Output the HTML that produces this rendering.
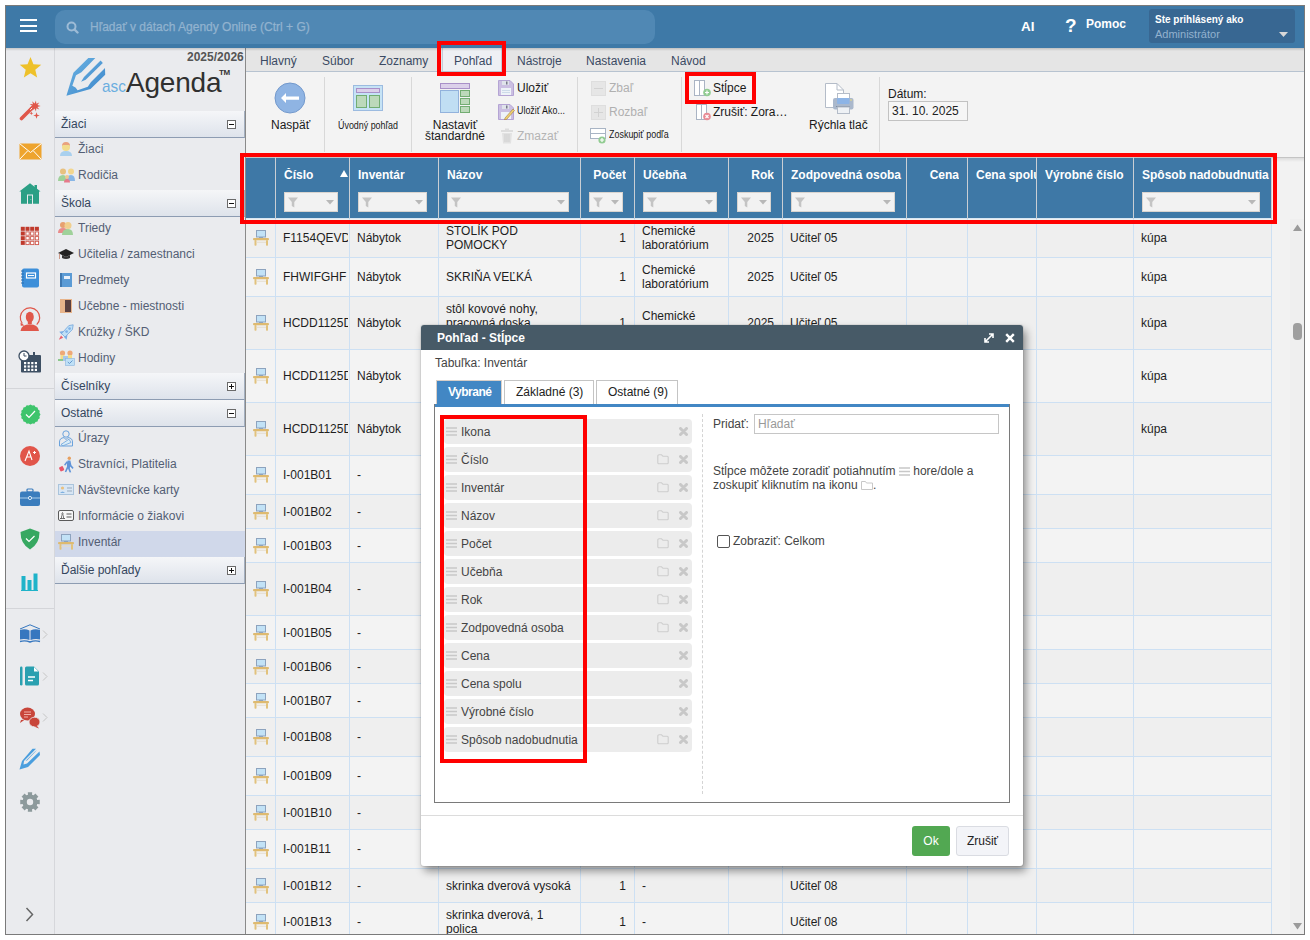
<!DOCTYPE html>
<html><head><meta charset="utf-8">
<style>
*{box-sizing:border-box;margin:0;padding:0}
html,body{width:1310px;height:940px;overflow:hidden;background:#fff;font-family:"Liberation Sans",sans-serif;font-size:12px;color:#222}
.a{position:absolute}
#frame{left:5px;top:5px;width:1300px;height:930px;border:1px solid #7a7a7a;z-index:100;pointer-events:none}
#clip{left:0;top:0;width:1310px;height:940px;clip-path:inset(6px 6px 6px 6px);overflow:hidden}
/* top bar */
#top{left:0;top:0;width:1310px;height:48px;background:#3e79a7}
#search{left:55px;top:10px;width:600px;height:34px;border-radius:10px;background:#5088b4}
/* icon column */
#icol{left:0;top:48px;width:55px;height:892px;background:#eaebee;border-right:1px solid #d6d7db}
#side{left:55px;top:48px;width:191px;height:892px;background:#eaebee;border-right:1px solid #8a8a8a}
.sh{position:absolute;left:55px;width:190px;height:27px;background:linear-gradient(#f5f6f8,#dee3eb);border-bottom:1px solid #8d9cb2;border-right:1px solid #a4b0c0;color:#34465e;font-size:12px;padding-left:6px;line-height:27px;z-index:2}
.sh .bx{position:absolute;left:172px;top:9px;width:9px;height:9px;border:1px solid #6a6a6a;background:#fff}
.sh .bx:before{content:"";position:absolute;left:1px;top:2.8px;width:5px;height:1.6px;background:#111}
.sh .bx.p:after{content:"";position:absolute;left:2.7px;top:1px;width:1.6px;height:5px;background:#111}
.si{position:absolute;left:55px;width:190px;height:26px;color:#535e74;font-size:12px;line-height:22px;padding-left:23px}
.si svg{position:absolute;left:3px;top:3px}
/* ribbon */
#tabs{left:246px;top:48px;width:1064px;height:24px;background:#e5e5e5;border-bottom:1px solid #b7c3d0}
#rib{left:246px;top:72px;width:1064px;height:86px;background:#f3f3f3;border-bottom:1px solid #c4c4c4}
.tb{position:absolute;top:54px;color:#3b4a63;font-size:12px;line-height:14px}
.rl{position:absolute;font-size:12px;color:#1a1a1a;line-height:14px;white-space:nowrap}
.rs{position:absolute;top:77px;width:1px;height:75px;background:#d8d8d8}
.hd{position:absolute;top:168px;color:#fff;font-weight:bold;font-size:12px;line-height:14px;white-space:nowrap;overflow:hidden}
.fb{position:absolute;top:192px;height:20px;background:#f2f2f2;border:1px solid #d9d4cf}
.fb .fn{position:absolute;left:3px;top:4px}
.fb .dd{position:absolute;right:3px;top:7px}
.cl{position:absolute;display:flex;align-items:center;font-size:12px;line-height:14px;color:#1e1e1e;overflow:hidden}
.nw{white-space:nowrap}
.rb{border:4px solid #f00;z-index:50}
.it{position:absolute;z-index:61;left:444px;width:248px;height:25px;background:#ececec;border-radius:4px;color:#444;font-size:12px;line-height:26px;padding-left:17px}
.it .hn{position:absolute;left:2px;top:8px}
.it .fo{position:absolute;left:213px;top:7px}
.it .xx{position:absolute;left:235px;top:8px}
</style></head><body>
<div id="clip" class="a">

  <div id="top" class="a"></div>
  <div class="a" style="left:20px;top:19px;width:17px;height:2.4px;background:#fff"></div>
  <div class="a" style="left:20px;top:24.5px;width:17px;height:2.2px;background:#fff"></div>
  <div class="a" style="left:20px;top:29.8px;width:17px;height:2.2px;background:#fff"></div>
  <div id="search" class="a"></div>
  <svg class="a" style="left:66px;top:21px" width="13" height="13" viewBox="0 0 13 13"><circle cx="5.5" cy="5.5" r="4" fill="none" stroke="#9dbbd6" stroke-width="2"/><path d="M8.5 8.5 L11.5 11.5" stroke="#9dbbd6" stroke-width="2.4" stroke-linecap="round"/></svg>
  <div class="a" style="left:90px;top:20px;color:#92b3cf;font-size:12px;-webkit-text-stroke:0.25px #92b3cf">Hľadať v dátach Agendy Online (Ctrl + G)</div>
  <div class="a" style="left:1021px;top:19px;color:#fff;font-size:13.5px;font-weight:bold;line-height:16px">AI</div>
  <div class="a" style="left:1065px;top:15px;color:#fff;font-size:19px;font-weight:bold;line-height:22px">?</div>
  <div class="a" style="left:1086px;top:16px;color:#fff;font-size:12px;font-weight:bold;line-height:16px">Pomoc</div>
  <div class="a" style="left:1149px;top:9px;width:146px;height:34px;border-radius:3px;background:#386792"></div>
  <div class="a" style="left:1155px;top:14px;color:#fff;font-size:10px;font-weight:bold;line-height:12px">Ste prihlásený ako</div>
  <div class="a" style="left:1155px;top:28px;color:#93b2cf;font-size:11px;line-height:13px">Administrátor</div>
  <svg class="a" style="left:1279px;top:32px" width="9" height="5" viewBox="0 0 9 5"><path d="M0 0H9L4.5 5Z" fill="#d8d8d8"/></svg>
  <div id="icol" class="a"></div>
  <svg class="a" style="left:18.5px;top:56px" width="23" height="23" viewBox="0 0 23 23"><polygon points="11.50,1.00 14.44,8.25 22.25,8.81 16.26,13.85 18.14,21.44 11.50,17.30 4.86,21.44 6.74,13.85 0.75,8.81 8.56,8.25" fill="#eec12a"/></svg>
  <svg class="a" style="left:19px;top:99px" width="23" height="23" viewBox="0 0 23 23"><path d="M2.5 19.5 L13.5 8.5" stroke="#e0574a" stroke-width="3.6" stroke-linecap="round"/><path d="M11.2 10.8 L13.6 8.4" stroke="#fff" stroke-width="0.9"/><polygon points="21.60,7.00 18.44,7.89 20.29,10.60 17.30,9.25 16.97,12.51 15.55,9.56 13.20,11.85 14.01,8.67 10.74,8.92 13.40,7.00 10.74,5.08 14.01,5.33 13.20,2.15 15.55,4.44 16.97,1.49 17.30,4.75 20.29,3.40 18.44,6.11" fill="#e0574a"/><polygon points="17.50,13.20 18.32,15.68 20.80,16.50 18.32,17.32 17.50,19.80 16.68,17.32 14.20,16.50 16.68,15.68" fill="#e0574a"/><polygon points="12.30,12.20 12.79,13.71 14.30,14.20 12.79,14.69 12.30,16.20 11.81,14.69 10.30,14.20 11.81,13.71" fill="#e0574a"/></svg>
  <svg class="a" style="left:19px;top:143px" width="23" height="17" viewBox="0 0 23 17"><rect x="0.5" y="0.5" width="22" height="16" fill="#eea42e"/><path d="M0.5 0.5 L11.5 9.5 L22.5 0.5 M0.5 16.5 L8.5 8 M22.5 16.5 L14.5 8" stroke="#fff" stroke-width="1" fill="none"/></svg>
  <svg class="a" style="left:19px;top:182px" width="23" height="23" viewBox="0 0 23 23"><path d="M11 1.2 L21.6 9.5 L20 9.5 L20 21.8 L14 21.8 L14 12.5 L8 12.5 L8 21.8 L2 21.8 L2 9.5 L0.3 9.5Z" fill="#2b9f85"/><rect x="15.5" y="3" width="2.5" height="4" fill="#2b9f85"/><rect x="9" y="13.5" width="4" height="8.3" fill="#2b9f85"/><circle cx="11.9" cy="17.5" r="0.4" fill="#cfe"/></svg>
  <svg class="a" style="left:20px;top:226px" width="20" height="20" viewBox="0 0 20 20"><rect x="0.8" y="0.8" width="4" height="4" fill="#c0392b"/><rect x="5.5" y="0.8" width="4" height="4" fill="#c0392b"/><rect x="10.2" y="0.8" width="4" height="4" fill="#c0392b"/><rect x="14.9" y="0.8" width="4" height="4" fill="#c0392b"/><rect x="0.8" y="5.5" width="4" height="4" fill="#c0392b"/><rect x="5.9" y="5.9" width="3.3" height="3.3" fill="#fff" stroke="#d0584c" stroke-width="0.9"/><rect x="10.6" y="5.9" width="3.3" height="3.3" fill="#fff" stroke="#d0584c" stroke-width="0.9"/><rect x="15.3" y="5.9" width="3.3" height="3.3" fill="#fff" stroke="#d0584c" stroke-width="0.9"/><rect x="0.8" y="10.2" width="4" height="4" fill="#c0392b"/><rect x="5.9" y="10.6" width="3.3" height="3.3" fill="#fff" stroke="#d0584c" stroke-width="0.9"/><rect x="10.6" y="10.6" width="3.3" height="3.3" fill="#fff" stroke="#d0584c" stroke-width="0.9"/><rect x="15.3" y="10.6" width="3.3" height="3.3" fill="#fff" stroke="#d0584c" stroke-width="0.9"/><rect x="0.8" y="14.9" width="4" height="4" fill="#c0392b"/><rect x="5.9" y="15.3" width="3.3" height="3.3" fill="#fff" stroke="#d0584c" stroke-width="0.9"/><rect x="10.6" y="15.3" width="3.3" height="3.3" fill="#fff" stroke="#d0584c" stroke-width="0.9"/><rect x="15.3" y="15.3" width="3.3" height="3.3" fill="#fff" stroke="#d0584c" stroke-width="0.9"/></svg>
  <svg class="a" style="left:20px;top:268px" width="20" height="20" viewBox="0 0 20 20"><rect x="2" y="0.5" width="17" height="19" rx="2" fill="#3d8fd9"/><path d="M1 3H4M1 6H4M1 9H4M1 12H4M1 15H4" stroke="#2a6fb0" stroke-width="1"/><rect x="6.5" y="5" width="9" height="5" fill="none" stroke="#fff" stroke-width="1.2"/><path d="M8 7.5H14" stroke="#fff" stroke-width="1"/></svg>
  <svg class="a" style="left:19px;top:307px" width="22" height="25" viewBox="0 0 22 25"><path d="M17.7 17.6 A9.7 9.7 0 1 0 3.3 16.5" stroke="#e0574a" stroke-width="1.2" fill="none"/><path d="M1.5 15.5 L5.5 18.5 L1.8 18.8Z" fill="#e0574a"/><ellipse cx="10.8" cy="10" rx="4" ry="5.2" fill="#e0574a"/><rect x="8.8" y="13" width="4" height="4" fill="#e0574a"/><path d="M1.5 24 Q2.5 17.3 10.8 17.3 Q19 17.3 20 24Z" fill="#e0574a"/></svg>
  <svg class="a" style="left:18px;top:350px" width="24" height="23" viewBox="0 0 24 23"><rect x="3" y="5" width="20" height="17.5" rx="1" fill="#3d4f63"/><rect x="15" y="2" width="2" height="5" fill="#3d4f63"/><rect x="6.0" y="12.0" width="2.2" height="2.2" fill="#fff"/><rect x="9.6" y="12.0" width="2.2" height="2.2" fill="#fff"/><rect x="13.2" y="12.0" width="2.2" height="2.2" fill="#fff"/><rect x="16.8" y="12.0" width="2.2" height="2.2" fill="#fff"/><rect x="6.0" y="15.4" width="2.2" height="2.2" fill="#fff"/><rect x="9.6" y="15.4" width="2.2" height="2.2" fill="#fff"/><rect x="13.2" y="15.4" width="2.2" height="2.2" fill="#fff"/><rect x="16.8" y="15.4" width="2.2" height="2.2" fill="#fff"/><rect x="6.0" y="18.8" width="2.2" height="2.2" fill="#fff"/><rect x="9.6" y="18.8" width="2.2" height="2.2" fill="#fff"/><rect x="13.2" y="18.8" width="2.2" height="2.2" fill="#fff"/><rect x="16.8" y="18.8" width="2.2" height="2.2" fill="#fff"/><circle cx="6" cy="6" r="5" fill="#fff" stroke="#3d4f63" stroke-width="1.3"/><path d="M6 3V6H8.5" stroke="#3d4f63" stroke-width="1" fill="none"/></svg>
  <div class="a" style="left:6px;top:388px;width:48px;height:1px;background:#d4d5d9"></div>
  <div class="a" style="left:6px;top:608px;width:48px;height:1px;background:#d4d5d9"></div>
  <svg class="a" style="left:19.5px;top:403.5px" width="21" height="21" viewBox="0 0 21 21"><polygon points="20.50,10.50 19.43,12.28 19.74,14.33 18.07,15.56 17.57,17.57 15.56,18.07 14.33,19.74 12.28,19.43 10.50,20.50 8.72,19.43 6.67,19.74 5.44,18.07 3.43,17.57 2.93,15.56 1.26,14.33 1.57,12.28 0.50,10.50 1.57,8.72 1.26,6.67 2.93,5.44 3.43,3.43 5.44,2.93 6.67,1.26 8.72,1.57 10.50,0.50 12.28,1.57 14.33,1.26 15.56,2.93 17.57,3.43 18.07,5.44 19.74,6.67 19.43,8.72" fill="#3ec46c"/><path d="M6 10.5 L9 13.5 L15 7" stroke="#fff" stroke-width="1.2" fill="none"/></svg>
  <svg class="a" style="left:20px;top:446px" width="20" height="20" viewBox="0 0 20 20"><circle cx="10" cy="10" r="10" fill="#e1554a"/><path d="M5 15 L9 5 L12 14 M6.5 11 H11.5" stroke="#fff" stroke-width="1.1" fill="none"/><path d="M13 6.5H16M14.5 5V8" stroke="#fff" stroke-width="1"/></svg>
  <svg class="a" style="left:20px;top:488px" width="20" height="20" viewBox="0 0 20 20"><rect x="7" y="1" width="6" height="3" rx="1" fill="none" stroke="#3b7dbd" stroke-width="1.2"/><rect x="0" y="3.5" width="20" height="14.5" rx="2" fill="#3b7dbd"/><path d="M0 10H20" stroke="#9ac0e2" stroke-width="1.2"/><circle cx="10" cy="10" r="1.6" fill="#3b7dbd" stroke="#d8e8f5" stroke-width="1"/></svg>
  <svg class="a" style="left:20px;top:528px" width="20" height="22" viewBox="0 0 20 22"><path d="M10 0.5 L19.5 4 Q19.5 16 10 21.5 Q0.5 16 0.5 4Z" fill="#37a861"/><path d="M6 10.5 L9 13.5 L14.5 8" stroke="#fff" stroke-width="1.2" fill="none"/></svg>
  <svg class="a" style="left:21px;top:573px" width="18" height="18" viewBox="0 0 18 18"><rect x="0.5" y="3" width="4" height="14" fill="#1fb3c9"/><rect x="6.5" y="7" width="4" height="10" fill="#1fb3c9"/><rect x="12.5" y="0.5" width="4" height="16.5" fill="#1fb3c9"/><rect x="0" y="17" width="17" height="1" fill="#1fb3c9"/></svg>
  <svg class="a" style="left:19px;top:624px" width="22" height="20" viewBox="0 0 22 20"><path d="M1 5 L11 0.8 L21 5" stroke="#3677bf" stroke-width="1" fill="none"/><path d="M1 6 Q6 4.5 10.5 6.5 V16 Q6 14.5 1 15.5Z" fill="#3677bf"/><path d="M21 6 Q16 4.5 11.5 6.5 V16 Q16 14.5 21 15.5Z" fill="#3677bf"/><path d="M1 17.5 Q6 16 11 18 Q16 16 21 17.5" stroke="#3677bf" stroke-width="1.4" fill="none"/></svg>
  <svg class="a" style="left:42px;top:630px" width="6" height="9" viewBox="0 0 6 9"><path d="M1 0.5 L5 4.5 L1 8.5" stroke="#c4c4c4" stroke-width="1" fill="none"/></svg>
  <svg class="a" style="left:20px;top:666px" width="20" height="20" viewBox="0 0 20 20"><rect x="0" y="0.5" width="2.5" height="19" rx="1.2" fill="#2aa0b0"/><path d="M5 2 Q5 0.5 6.5 0.5 H14 L19 5.5 V18 Q19 19.5 17.5 19.5 H6.5 Q5 19.5 5 18Z" fill="#2aa0b0"/><path d="M14 1 V5.5 H18.5" fill="#fff"/><path d="M8 11H15M8 14.5H13" stroke="#fff" stroke-width="1.3"/></svg>
  <svg class="a" style="left:42px;top:672px" width="6" height="9" viewBox="0 0 6 9"><path d="M1 0.5 L5 4.5 L1 8.5" stroke="#c4c4c4" stroke-width="1" fill="none"/></svg>
  <svg class="a" style="left:19px;top:707px" width="22" height="22" viewBox="0 0 22 22"><ellipse cx="8.5" cy="7" rx="7.5" ry="6.5" fill="#c8453a"/><path d="M2 13 L1 16 L6 12.5Z" fill="#c8453a"/><ellipse cx="15.5" cy="15" rx="5.5" ry="4.8" fill="#c8453a" stroke="#eaebee" stroke-width="0.8"/><path d="M18 19 L20 21.5 L15 19.5Z" fill="#c8453a"/><path d="M5 5H12M5 7.5H12M5 10H9" stroke="#f0b0a8" stroke-width="1"/></svg>
  <svg class="a" style="left:42px;top:713px" width="6" height="9" viewBox="0 0 6 9"><path d="M1 0.5 L5 4.5 L1 8.5" stroke="#c4c4c4" stroke-width="1" fill="none"/></svg>
  <svg class="a" style="left:19px;top:748px" width="22" height="22" viewBox="0 0 22 22"><path d="M13.5 0.8 L17 0.8 L5 13 L4.5 16.5 L8 15.5 L20.5 3.5 L21 7 L9 19 L0.5 21.5 L3 13Z" fill="#4a9ede"/><path d="M15.5 4 L18 2 L8 12.5 L6.5 13Z" fill="#4a9ede"/></svg>
  <svg class="a" style="left:20px;top:792px" width="20" height="20" viewBox="0 0 20 20"><polygon points="17.02,7.98 19.76,7.82 19.76,12.18 17.02,12.02 16.39,13.53 18.44,15.36 15.36,18.44 13.53,16.39 12.02,17.02 12.18,19.76 7.82,19.76 7.98,17.02 6.47,16.39 4.64,18.44 1.56,15.36 3.61,13.53 2.98,12.02 0.24,12.18 0.24,7.82 2.98,7.98 3.61,6.47 1.56,4.64 4.64,1.56 6.47,3.61 7.98,2.98 7.82,0.24 12.18,0.24 12.02,2.98 13.53,3.61 15.36,1.56 18.44,4.64 16.39,6.47" fill="#8d9a9c"/><circle cx="10" cy="10" r="7.6" fill="#8d9a9c"/><circle cx="10" cy="10" r="3.2" fill="#eaebee"/></svg>
  <svg class="a" style="left:25px;top:907px" width="10" height="15" viewBox="0 0 10 15"><path d="M1.5 1 L7.5 7.5 L1.5 14" stroke="#666" stroke-width="1.5" fill="none"/></svg>

  <div id="side" class="a"></div>
  <!-- logo -->
  <div class="a" style="left:187px;top:50px;font-size:12px;font-weight:bold;color:#555;line-height:14px">2025/2026</div>
  <svg class="a" style="left:60px;top:52px" width="50" height="48" viewBox="0 0 50 48"><defs><linearGradient id="lg" x1="0" y1="0" x2="1" y2="1"><stop offset="0" stop-color="#6db4e3"/><stop offset="1" stop-color="#3a85ca"/></linearGradient></defs><polygon points="28.3,6.0 35.3,6.0 21.4,20.3 16.0,23.2 12.3,33.7 15.5,35.5 17.6,38.2 27.8,34.7 31.0,30.0 45.0,16.0 45.2,22.7 30.5,36.9 6.4,43.8 13.4,20.8" fill="url(#lg)"/><polygon points="40.6,8.6 42.8,11.0 25.7,27.8 21.1,29.7 24.0,24.9" fill="url(#lg)"/></svg>
  <div class="a" style="left:102px;top:77px;font-size:17px;color:#6aaee0;line-height:20px;transform:scaleX(0.9);transform-origin:0 0">asc</div>
  <div class="a" style="left:126px;top:67px;font-size:28px;color:#303030;line-height:32px;letter-spacing:-0.2px">Agenda</div>
  <div class="a" style="left:219px;top:69px;font-size:8px;font-weight:bold;color:#333;line-height:8px;letter-spacing:-0.5px">TM</div>
  <div class="sh" style="top:111px">Žiaci<span class="bx"></span></div>
  <div class="si" style="top:138px"><svg width="16" height="16" viewBox="0 0 16 16"><path d="M2 15 Q2 10 8 10 Q14 10 14 15Z" fill="#a9d0ee"/><circle cx="8" cy="6" r="4" fill="#f2dc8c"/><path d="M4 5 Q4 1 8 1 Q12 1 12 5 L11 4 L5 4Z" fill="#e9a27e"/></svg>Žiaci</div>
  <div class="si" style="top:164px"><svg width="18" height="16" viewBox="0 0 18 16"><path d="M0 14 Q0 8 5 8 Q9 8 9 14Z" fill="#9fd19a"/><circle cx="5" cy="4.5" r="3" fill="#e8c17f"/><path d="M8 14 Q8 8 13 8 Q17 8 17 14Z" fill="#88b6e6"/><circle cx="13" cy="4.5" r="3" fill="#f3d68e"/><path d="M6 15.5 Q6 12 9 12 Q12 12 12 15.5Z" fill="#e57a8a"/><circle cx="9" cy="10" r="2" fill="#f0c890"/></svg>Rodičia</div>
  <div class="sh" style="top:190px">Škola<span class="bx"></span></div>
  <div class="si" style="top:217px"><svg width="16" height="16" viewBox="0 0 16 16"><path d="M0 13 Q0 8 5 8 Q10 8 10 13Z" fill="#e98b8b"/><circle cx="5" cy="5" r="3" fill="#e7a070"/><path d="M4 15 Q4 9 10 9 Q15 9 15 15Z" fill="#9fd19a"/><circle cx="10" cy="5.5" r="3.5" fill="#f1cf8e"/></svg>Triedy</div>
  <div class="si" style="top:243px"><svg width="16" height="16" viewBox="0 0 16 16"><path d="M0 7 L8 3 L16 7 L8 11Z" fill="#222"/><path d="M4 9 L4 12 Q8 14 12 12 L12 9 L8 11Z" fill="#333"/><path d="M1.5 7.5 L1.5 13" stroke="#c98" stroke-width="1"/></svg>Učitelia / zamestnanci</div>
  <div class="si" style="top:269px"><svg width="16" height="16" viewBox="0 0 16 16"><rect x="2" y="1" width="12" height="14" fill="#5b9bd5"/><rect x="2" y="1" width="2" height="14" fill="#3f78b0"/><rect x="6" y="4" width="6" height="3" fill="#e8f0fa"/></svg>Predmety</div>
  <div class="si" style="top:295px"><svg width="16" height="16" viewBox="0 0 16 16"><rect x="2" y="1" width="12" height="14" fill="#e8b48a"/><rect x="7" y="2" width="6" height="12" fill="#5a4040"/></svg>Učebne - miestnosti</div>
  <div class="si" style="top:321px"><svg width="16" height="17" viewBox="0 0 16 17"><polygon points="5.5,7 1.2,7.8 3.8,10.6" fill="#7aaee6"/><polygon points="9.5,11 8.6,15.8 6,13" fill="#7aaee6"/><polygon points="3,11.5 5.2,13.7 0.8,15.8" fill="#e8606e"/><polygon points="15.2,0.8 14.4,5.5 7,13 3.6,9.6 10.8,1.6" fill="#c0e0f6" stroke="#74a6dc" stroke-width="0.8"/><circle cx="11.6" cy="4.6" r="1.4" fill="#80b2e8"/><circle cx="8.6" cy="7.6" r="1.4" fill="#80b2e8"/></svg>Krúžky / ŠKD</div>
  <div class="si" style="top:347px"><svg width="18" height="16" viewBox="0 0 18 16"><circle cx="4.5" cy="3" r="2.6" fill="#eea878"/><circle cx="12" cy="3" r="2.6" fill="#eea878"/><path d="M2.5 5 H6.5 V11 H2.5Z" fill="#f4dc8a"/><path d="M10 5 H14 V11 H10Z" fill="#f4dc8a"/><rect x="0" y="9" width="6" height="2" fill="#8cc88c"/><rect x="5" y="6" width="5" height="5" fill="#a8c8e8"/><rect x="7.5" y="8.5" width="9" height="7" fill="#bfe0f6" stroke="#8ab4de" stroke-width="0.6"/><path d="M9.8 12 L11.5 13.5 L14.5 10.5" stroke="#5a8fc8" fill="none" stroke-width="0.9"/></svg>Hodiny</div>
  <div class="sh" style="top:373px">Číselníky<span class="bx p"></span></div>
  <div class="sh" style="top:400px">Ostatné<span class="bx"></span></div>
  <div class="si" style="top:427px"><svg width="16" height="17" viewBox="0 0 16 17"><circle cx="8" cy="4" r="3.2" fill="none" stroke="#6aa2dc" stroke-width="1"/><path d="M1.5 16 V12 Q1.5 8 6 7.6 L8 9.5 L10 7.6 Q14.5 8 14.5 12 V16Z" fill="none" stroke="#6aa2dc" stroke-width="1"/><path d="M3 14.5 L11 9.2 L13 12.5 L5 15.8Z" fill="#d8ecf8" stroke="#6aa2dc" stroke-width="0.8"/></svg>Úrazy</div>
  <div class="si" style="top:453px"><svg width="16" height="17" viewBox="0 0 16 17"><circle cx="11.3" cy="2.2" r="1.7" fill="#e6a060"/><polygon points="9.6,4.4 12.4,4.4 13.4,9.2 15.6,11.8 14.6,12.9 12.2,10.5 11.8,12.2 13.2,16.2 11.6,16.4 10,12.6 8.2,16.3 6.8,15.7 9,10.5 8.9,7" fill="#6094d8"/><path d="M9.2 5.8 L6.6 9.2" stroke="#6094d8" stroke-width="1.4"/><rect x="1.5" y="10.5" width="4.2" height="4.6" rx="1" fill="#e8566a" transform="rotate(-25 3.6 12.8)"/></svg>Stravníci, Platitelia</div>
  <div class="si" style="top:479px"><svg width="16" height="14" viewBox="0 0 16 14"><rect x="0.5" y="2.5" width="15" height="10" fill="#d8e6f4" stroke="#aac4dc"/><circle cx="4.5" cy="6" r="1.6" fill="#e9c07e"/><path d="M2 11 Q4.5 8 7 11Z" fill="#7fb0e0"/><path d="M9 6H14M9 9H14" stroke="#9ab" stroke-width="1"/></svg>Návštevnícke karty</div>
  <div class="si" style="top:505px"><svg width="16" height="14" viewBox="0 0 16 14"><rect x="0.5" y="2.5" width="15" height="10" rx="1.5" fill="#f6f6f6" stroke="#5a5a5a"/><path d="M3.5 10.5 V9 Q3.5 7.5 4.3 7 Q3.3 6 4.5 4.5 Q5.7 6 4.7 7 Q5.5 7.5 5.5 9 V10.5 H7 H2Z" fill="none" stroke="#5a5a5a" stroke-width="0.8"/><path d="M8.5 6H13.5M8.5 9H13.5" stroke="#5a5a5a" stroke-width="1"/></svg>Informácie o žiakovi</div>
  <div class="si" style="top:531px;background:#d0d8ea"><svg width="16" height="16" viewBox="0 0 16 16"><rect x="3.5" y="0.5" width="9" height="6.5" fill="#c2e2f6" stroke="#8da3be" stroke-width="1"/><rect x="6" y="7" width="4" height="1" fill="#8da3be"/><rect x="0" y="8" width="16" height="2.2" rx="1" fill="#deba70"/><rect x="1.5" y="10" width="2" height="5.7" rx="0.8" fill="#e2c27c"/><rect x="13" y="10" width="2" height="5.7" rx="0.8" fill="#e2c27c"/><rect x="3.5" y="11.8" width="9.5" height="0.9" fill="#e4dccb"/></svg>Inventár</div>
  <div class="sh" style="top:557px">Ďalšie pohľady<span class="bx p"></span></div>

  <div id="tabs" class="a"></div>
  <div class="a" style="left:442px;top:48px;width:60px;height:23px;background:#eef0f4;border-left:1px solid #c4ccd8;border-right:1px solid #c4ccd8"></div>
  <div class="a" style="left:0;top:48px;width:1310px;height:3px;background:linear-gradient(rgba(0,0,0,0.16),rgba(0,0,0,0));z-index:4"></div>
  <div class="tb" style="left:260px">Hlavný</div>
  <div class="tb" style="left:322px">Súbor</div>
  <div class="tb" style="left:379px">Zoznamy</div>
  <div class="tb" style="left:454px">Pohľad</div>
  <div class="tb" style="left:517px">Nástroje</div>
  <div class="tb" style="left:586px">Nastavenia</div>
  <div class="tb" style="left:671px">Návod</div>
  <div id="rib" class="a"></div>
  <div class="rs" style="left:324px"></div>
  <div class="rs" style="left:411px"></div>
  <div class="rs" style="left:577px"></div>
  <div class="rs" style="left:681px"></div>
  <div class="rs" style="left:879px"></div>
  <!-- Naspat -->
  <svg class="a" style="left:274px;top:82px" width="32" height="32" viewBox="0 0 32 32"><circle cx="16" cy="16" r="15" fill="#8fb4e3" stroke="#7399cc" stroke-width="1"/><path d="M7 16 L12 11 L12 14.5 L25 14.5 L25 17.7 L12 17.7 L12 21Z" fill="#fff"/></svg>
  <div class="rl" style="left:271px;top:118px">Naspäť</div>
  <!-- Uvodny pohlad -->
  <svg class="a" style="left:352px;top:84px" width="32" height="28" viewBox="0 0 32 28"><rect x="1.5" y="1.5" width="29" height="25" fill="#c6e3f5" stroke="#9cbbe0"/><rect x="4.5" y="4.5" width="23" height="4" fill="#dcd0ea" stroke="#a990c8"/><rect x="4.5" y="11.5" width="10" height="12" fill="#bcd9ba" stroke="#72ad72"/><rect x="17.5" y="11.5" width="10" height="12" fill="#bcd9ba" stroke="#72ad72"/></svg>
  <div class="rl" style="left:338px;top:119px;font-size:10px;transform:scaleX(0.89);transform-origin:0 0">Úvodný pohľad</div>
  <!-- Nastavit standardne -->
  <svg class="a" style="left:439px;top:82px" width="32" height="32" viewBox="0 0 32 32"><rect x="1.5" y="1.5" width="29" height="5" fill="#dcd0ea" stroke="#a990c8"/><rect x="1.5" y="8.5" width="18" height="22" fill="#c0def3" stroke="#92b2dc"/><rect x="21.5" y="8.5" width="9" height="6" fill="#bcd9ba" stroke="#72ad72"/><rect x="21.5" y="16.5" width="9" height="6" fill="#bcd9ba" stroke="#72ad72"/><rect x="21.5" y="24.5" width="9" height="6" fill="#bcd9ba" stroke="#72ad72"/></svg>
  <div class="rl" style="left:424px;top:120px;width:62px;text-align:center;line-height:11px">Nastaviť<br>štandardné</div>
  <!-- save group -->
  <svg class="a" style="left:498px;top:80px" width="16" height="16" viewBox="0 0 16 16"><path d="M0.5 0.5 H12 L15.5 4 V15.5 H0.5Z" fill="#cbbfe2" stroke="#b4a4d4"/><rect x="4" y="1" width="7" height="4" fill="#dfe3ea"/><rect x="8" y="1.5" width="1.5" height="3" fill="#778"/><rect x="3" y="8" width="10" height="7" fill="#eef3f8"/><path d="M4 10.5H12M4 12.5H12" stroke="#c4d4e4" stroke-width="0.8"/></svg>
  <div class="rl" style="left:517px;top:81px;font-size:12px">Uložiť</div>
  <svg class="a" style="left:498px;top:104px" width="17" height="16" viewBox="0 0 17 16"><path d="M0.5 0.5 H12 L15.5 4 V15.5 H0.5Z" fill="#cbbfe2" stroke="#b4a4d4"/><rect x="4" y="1" width="7" height="4" fill="#dfe3ea"/><rect x="8" y="1.5" width="1.5" height="3" fill="#778"/><rect x="3" y="8" width="10" height="7" fill="#eef3f8"/><path d="M7 14 L15 5 L16.5 6.5 L8.5 15.5 L6.5 15.8Z" fill="#f0d070" stroke="#a08040" stroke-width="0.6"/></svg>
  <div class="rl" style="left:517px;top:104px;font-size:10px;transform:scaleX(0.89);transform-origin:0 0">Uložiť Ako...</div>
  <svg class="a" style="left:500px;top:128px" width="14" height="16" viewBox="0 0 14 16"><rect x="1" y="2" width="12" height="2" fill="#ddd"/><rect x="5" y="0.5" width="4" height="2" fill="#ddd"/><path d="M2 5 H12 L11 15.5 H3Z" fill="#e2e2e2"/><path d="M5 6V14M7 6V14M9 6V14" stroke="#cfcfcf"/></svg>
  <div class="rl" style="left:517px;top:129px;font-size:12px;color:#b4b4b4">Zmazať</div>
  <!-- zbal group -->
  <svg class="a" style="left:591px;top:81px" width="15" height="15" viewBox="0 0 15 15"><rect x="0.5" y="0.5" width="14" height="14" fill="#e6e6e6" stroke="#dedede"/><path d="M3 7.5H12" stroke="#d2d2d2" stroke-width="1"/></svg>
  <div class="rl" style="left:609px;top:81px;color:#b0b0b0">Zbaľ</div>
  <svg class="a" style="left:591px;top:105px" width="15" height="15" viewBox="0 0 15 15"><rect x="0.5" y="0.5" width="14" height="14" fill="#e6e6e6" stroke="#dedede"/><path d="M3 7.5H12M7.5 3V12" stroke="#d2d2d2" stroke-width="1"/></svg>
  <div class="rl" style="left:609px;top:105px;color:#b0b0b0">Rozbaľ</div>
  <svg class="a" style="left:590px;top:128px" width="17" height="16" viewBox="0 0 17 16"><rect x="0.5" y="0.5" width="15" height="10" fill="#fff" stroke="#a8b4c4"/><path d="M0.5 5.5H15.5" stroke="#a8b4c4"/><circle cx="12" cy="12" r="3.6" fill="#92cc92"/><path d="M10 12H14M12 10V14" stroke="#fff" stroke-width="1.2"/></svg>
  <div class="rl" style="left:609px;top:128px;font-size:10px;transform:scaleX(0.895);transform-origin:0 0">Zoskupiť podľa</div>
  <!-- stlpce -->
  <svg class="a" style="left:693px;top:80px" width="18" height="17" viewBox="0 0 18 17"><rect x="1.5" y="0.5" width="10" height="15" fill="#fff" stroke="#aab4c4"/><path d="M6.5 0.5V15.5" stroke="#aab4c4"/><circle cx="14" cy="12.5" r="3.8" fill="#92cc92"/><path d="M12 12.5H16M14 10.5V14.5" stroke="#fff" stroke-width="1.2"/></svg>
  <div class="rl" style="left:713px;top:81px;font-size:12px">Stĺpce</div>
  <svg class="a" style="left:695px;top:104px" width="16" height="17" viewBox="0 0 16 17"><rect x="1.5" y="0.5" width="10" height="15" fill="#fff" stroke="#aab4c4"/><path d="M6.5 0.5V15.5" stroke="#aab4c4"/><circle cx="12" cy="12.5" r="3.8" fill="#e88a94"/><path d="M10.5 11L13.5 14M13.5 11L10.5 14" stroke="#fff" stroke-width="1.1"/></svg>
  <div class="rl" style="left:713px;top:105px;font-size:12px">Zrušiť: Zora…</div>
  <!-- printer -->
  <svg class="a" style="left:824px;top:82px" width="32" height="33" viewBox="0 0 32 33"><path d="M1.5 1.5 H13 L19.5 8 V25.5 H1.5Z" fill="#fff" stroke="#b4bcc8"/><path d="M13 1.5V8H19.5" fill="none" stroke="#b4bcc8"/><rect x="13.5" y="11.5" width="12" height="6" fill="#fff" stroke="#b4bcc8"/><rect x="9" y="16" width="20.5" height="11.5" rx="2" fill="#aab8cc"/><rect x="13" y="16" width="12.5" height="6" rx="1" fill="#8db4e6"/><rect x="12" y="24" width="14" height="1" fill="#7f8ea4"/><rect x="13.5" y="25" width="12" height="6.5" fill="#eef1f5" stroke="#b4bcc8"/><circle cx="27" cy="18" r="0.8" fill="#f4e070"/></svg>
  <div class="rl" style="left:809px;top:118px">Rýchla tlač</div>
  <div class="rl" style="left:888px;top:87px">Dátum:</div>
  <div class="a" style="left:888px;top:101px;width:80px;height:20px;border:1px solid #c2c2c2;background:#f6f6f6;padding-left:3px;line-height:18px;font-size:12px;color:#222">31. 10. 2025</div>
  <div class="a" style="left:246px;top:158px;width:1058px;height:776px;background:#f2f2f2"></div>
  <div class="a" style="left:246px;top:158px;width:1058px;height:4px;background:linear-gradient(rgba(0,0,0,0.09),rgba(0,0,0,0))"></div>
  <div class="a" style="left:246px;top:219px;width:1025px;height:39px;background:#efefef;border-bottom:1px solid #cde0f3"></div>
  <div class="a" style="left:246px;top:258px;width:1025px;height:39px;background:#f3f3f3;border-bottom:1px solid #cde0f3"></div>
  <div class="a" style="left:246px;top:297px;width:1025px;height:53px;background:#efefef;border-bottom:1px solid #cde0f3"></div>
  <div class="a" style="left:246px;top:350px;width:1025px;height:53px;background:#f3f3f3;border-bottom:1px solid #cde0f3"></div>
  <div class="a" style="left:246px;top:403px;width:1025px;height:53px;background:#efefef;border-bottom:1px solid #cde0f3"></div>
  <div class="a" style="left:246px;top:456px;width:1025px;height:39px;background:#f3f3f3;border-bottom:1px solid #cde0f3"></div>
  <div class="a" style="left:246px;top:495px;width:1025px;height:34px;background:#efefef;border-bottom:1px solid #cde0f3"></div>
  <div class="a" style="left:246px;top:529px;width:1025px;height:34px;background:#f3f3f3;border-bottom:1px solid #cde0f3"></div>
  <div class="a" style="left:246px;top:563px;width:1025px;height:53px;background:#efefef;border-bottom:1px solid #cde0f3"></div>
  <div class="a" style="left:246px;top:616px;width:1025px;height:34px;background:#f3f3f3;border-bottom:1px solid #cde0f3"></div>
  <div class="a" style="left:246px;top:650px;width:1025px;height:34px;background:#efefef;border-bottom:1px solid #cde0f3"></div>
  <div class="a" style="left:246px;top:684px;width:1025px;height:34px;background:#f3f3f3;border-bottom:1px solid #cde0f3"></div>
  <div class="a" style="left:246px;top:718px;width:1025px;height:39px;background:#efefef;border-bottom:1px solid #cde0f3"></div>
  <div class="a" style="left:246px;top:757px;width:1025px;height:39px;background:#f3f3f3;border-bottom:1px solid #cde0f3"></div>
  <div class="a" style="left:246px;top:796px;width:1025px;height:34px;background:#efefef;border-bottom:1px solid #cde0f3"></div>
  <div class="a" style="left:246px;top:830px;width:1025px;height:39px;background:#f3f3f3;border-bottom:1px solid #cde0f3"></div>
  <div class="a" style="left:246px;top:869px;width:1025px;height:34px;background:#efefef;border-bottom:1px solid #cde0f3"></div>
  <div class="a" style="left:246px;top:903px;width:1025px;height:39px;background:#f3f3f3;border-bottom:1px solid #cde0f3"></div>
  <div class="a" style="left:275px;top:218px;width:1px;height:716px;background:#cde0f3"></div>
  <div class="a" style="left:349px;top:218px;width:1px;height:716px;background:#cde0f3"></div>
  <div class="a" style="left:438px;top:218px;width:1px;height:716px;background:#cde0f3"></div>
  <div class="a" style="left:580px;top:218px;width:1px;height:716px;background:#cde0f3"></div>
  <div class="a" style="left:634px;top:218px;width:1px;height:716px;background:#cde0f3"></div>
  <div class="a" style="left:728px;top:218px;width:1px;height:716px;background:#cde0f3"></div>
  <div class="a" style="left:782px;top:218px;width:1px;height:716px;background:#cde0f3"></div>
  <div class="a" style="left:906px;top:218px;width:1px;height:716px;background:#cde0f3"></div>
  <div class="a" style="left:967px;top:218px;width:1px;height:716px;background:#cde0f3"></div>
  <div class="a" style="left:1036px;top:218px;width:1px;height:716px;background:#cde0f3"></div>
  <div class="a" style="left:1133px;top:218px;width:1px;height:716px;background:#cde0f3"></div>
  <div class="a" style="left:1271px;top:218px;width:1px;height:716px;background:#cde0f3"></div>
  <div class="a" style="left:246px;top:158px;width:1026px;height:61px;background:#3e78a6;border-bottom:1px solid #d8e6f2"></div>
  <div class="a" style="left:275px;top:157px;width:1px;height:62px;background:#c9ced4"></div>
  <div class="a" style="left:349px;top:157px;width:1px;height:62px;background:#c9ced4"></div>
  <div class="a" style="left:438px;top:157px;width:1px;height:62px;background:#c9ced4"></div>
  <div class="a" style="left:580px;top:157px;width:1px;height:62px;background:#c9ced4"></div>
  <div class="a" style="left:634px;top:157px;width:1px;height:62px;background:#c9ced4"></div>
  <div class="a" style="left:728px;top:157px;width:1px;height:62px;background:#c9ced4"></div>
  <div class="a" style="left:782px;top:157px;width:1px;height:62px;background:#c9ced4"></div>
  <div class="a" style="left:906px;top:157px;width:1px;height:62px;background:#c9ced4"></div>
  <div class="a" style="left:967px;top:157px;width:1px;height:62px;background:#c9ced4"></div>
  <div class="a" style="left:1036px;top:157px;width:1px;height:62px;background:#c9ced4"></div>
  <div class="a" style="left:1133px;top:157px;width:1px;height:62px;background:#c9ced4"></div>
  <div class="a" style="left:1271px;top:157px;width:1px;height:62px;background:#c9ced4"></div>
  <div class="hd" style="left:284px;width:65px">Číslo</div>
  <div class="fb" style="left:284px;width:54px"><svg class="fn" width="11" height="11" viewBox="0 0 11 11"><path d="M0 0.5H10L6.3 5V10.5L3.8 9V5Z" fill="#c4c4c4"/></svg><svg class="dd" width="8" height="5" viewBox="0 0 8 5"><path d="M0 0H8L4 4.5Z" fill="#b8b8b8"/></svg></div>
  <div class="hd" style="left:358px;width:80px">Inventár</div>
  <div class="fb" style="left:358px;width:69px"><svg class="fn" width="11" height="11" viewBox="0 0 11 11"><path d="M0 0.5H10L6.3 5V10.5L3.8 9V5Z" fill="#c4c4c4"/></svg><svg class="dd" width="8" height="5" viewBox="0 0 8 5"><path d="M0 0H8L4 4.5Z" fill="#b8b8b8"/></svg></div>
  <div class="hd" style="left:447px;width:133px">Názov</div>
  <div class="fb" style="left:447px;width:122px"><svg class="fn" width="11" height="11" viewBox="0 0 11 11"><path d="M0 0.5H10L6.3 5V10.5L3.8 9V5Z" fill="#c4c4c4"/></svg><svg class="dd" width="8" height="5" viewBox="0 0 8 5"><path d="M0 0H8L4 4.5Z" fill="#b8b8b8"/></svg></div>
  <div class="hd" style="left:580px;width:46px;text-align:right">Počet</div>
  <div class="fb" style="left:589px;width:34px"><svg class="fn" width="11" height="11" viewBox="0 0 11 11"><path d="M0 0.5H10L6.3 5V10.5L3.8 9V5Z" fill="#c4c4c4"/></svg><svg class="dd" width="8" height="5" viewBox="0 0 8 5"><path d="M0 0H8L4 4.5Z" fill="#b8b8b8"/></svg></div>
  <div class="hd" style="left:643px;width:85px">Učebňa</div>
  <div class="fb" style="left:643px;width:74px"><svg class="fn" width="11" height="11" viewBox="0 0 11 11"><path d="M0 0.5H10L6.3 5V10.5L3.8 9V5Z" fill="#c4c4c4"/></svg><svg class="dd" width="8" height="5" viewBox="0 0 8 5"><path d="M0 0H8L4 4.5Z" fill="#b8b8b8"/></svg></div>
  <div class="hd" style="left:728px;width:46px;text-align:right">Rok</div>
  <div class="fb" style="left:737px;width:34px"><svg class="fn" width="11" height="11" viewBox="0 0 11 11"><path d="M0 0.5H10L6.3 5V10.5L3.8 9V5Z" fill="#c4c4c4"/></svg><svg class="dd" width="8" height="5" viewBox="0 0 8 5"><path d="M0 0H8L4 4.5Z" fill="#b8b8b8"/></svg></div>
  <div class="hd" style="left:791px;width:115px">Zodpovedná osoba</div>
  <div class="fb" style="left:791px;width:104px"><svg class="fn" width="11" height="11" viewBox="0 0 11 11"><path d="M0 0.5H10L6.3 5V10.5L3.8 9V5Z" fill="#c4c4c4"/></svg><svg class="dd" width="8" height="5" viewBox="0 0 8 5"><path d="M0 0H8L4 4.5Z" fill="#b8b8b8"/></svg></div>
  <div class="hd" style="left:906px;width:53px;text-align:right">Cena</div>
  <div class="hd" style="left:976px;width:60px">Cena spolu</div>
  <div class="hd" style="left:1045px;width:88px">Výrobné číslo</div>
  <div class="hd" style="left:1142px;width:129px">Spôsob nadobudnutia</div>
  <div class="fb" style="left:1142px;width:118px"><svg class="fn" width="11" height="11" viewBox="0 0 11 11"><path d="M0 0.5H10L6.3 5V10.5L3.8 9V5Z" fill="#c4c4c4"/></svg><svg class="dd" width="8" height="5" viewBox="0 0 8 5"><path d="M0 0H8L4 4.5Z" fill="#b8b8b8"/></svg></div>
  <svg class="a" style="left:340px;top:170px" width="8" height="7" viewBox="0 0 8 7"><path d="M4 0L8 7H0Z" fill="#fff"/></svg>
  <div class="a" style="left:253px;top:230px"><svg width="16" height="16" viewBox="0 0 16 16"><rect x="3.5" y="0.5" width="9" height="6.5" fill="#c2e2f6" stroke="#8da3be" stroke-width="1"/><rect x="6" y="7" width="4" height="1" fill="#8da3be"/><rect x="0" y="8" width="16" height="2.2" rx="1" fill="#deba70"/><rect x="1.5" y="10" width="2" height="5.7" rx="0.8" fill="#e2c27c"/><rect x="13" y="10" width="2" height="5.7" rx="0.8" fill="#e2c27c"/><rect x="3.5" y="11.8" width="9.5" height="0.9" fill="#e4dccb"/></svg></div>
  <div class="cl" style="left:283px;top:219px;width:65px;height:38px"><span class="nw">F1154QEVD</span></div>
  <div class="cl" style="left:357px;top:219px;width:80px;height:38px">Nábytok</div>
  <div class="cl" style="left:446px;top:219px;width:133px;height:38px">STOLÍK POD<br>POMOCKY</div>
  <div class="cl" style="left:581px;top:219px;width:45px;height:38px;justify-content:flex-end;text-align:right">1</div>
  <div class="cl" style="left:642px;top:219px;width:85px;height:38px">Chemické<br>laboratórium</div>
  <div class="cl" style="left:729px;top:219px;width:45px;height:38px;justify-content:flex-end;text-align:right">2025</div>
  <div class="cl" style="left:790px;top:219px;width:115px;height:38px">Učiteľ 05</div>
  <div class="cl" style="left:1141px;top:219px;width:129px;height:38px">kúpa</div>
  <div class="a" style="left:253px;top:269px"><svg width="16" height="16" viewBox="0 0 16 16"><rect x="3.5" y="0.5" width="9" height="6.5" fill="#c2e2f6" stroke="#8da3be" stroke-width="1"/><rect x="6" y="7" width="4" height="1" fill="#8da3be"/><rect x="0" y="8" width="16" height="2.2" rx="1" fill="#deba70"/><rect x="1.5" y="10" width="2" height="5.7" rx="0.8" fill="#e2c27c"/><rect x="13" y="10" width="2" height="5.7" rx="0.8" fill="#e2c27c"/><rect x="3.5" y="11.8" width="9.5" height="0.9" fill="#e4dccb"/></svg></div>
  <div class="cl" style="left:283px;top:258px;width:65px;height:38px"><span class="nw">FHWIFGHF</span></div>
  <div class="cl" style="left:357px;top:258px;width:80px;height:38px">Nábytok</div>
  <div class="cl" style="left:446px;top:258px;width:133px;height:38px">SKRIŇA VEĽKÁ</div>
  <div class="cl" style="left:581px;top:258px;width:45px;height:38px;justify-content:flex-end;text-align:right">1</div>
  <div class="cl" style="left:642px;top:258px;width:85px;height:38px">Chemické<br>laboratórium</div>
  <div class="cl" style="left:729px;top:258px;width:45px;height:38px;justify-content:flex-end;text-align:right">2025</div>
  <div class="cl" style="left:790px;top:258px;width:115px;height:38px">Učiteľ 05</div>
  <div class="cl" style="left:1141px;top:258px;width:129px;height:38px">kúpa</div>
  <div class="a" style="left:253px;top:315px"><svg width="16" height="16" viewBox="0 0 16 16"><rect x="3.5" y="0.5" width="9" height="6.5" fill="#c2e2f6" stroke="#8da3be" stroke-width="1"/><rect x="6" y="7" width="4" height="1" fill="#8da3be"/><rect x="0" y="8" width="16" height="2.2" rx="1" fill="#deba70"/><rect x="1.5" y="10" width="2" height="5.7" rx="0.8" fill="#e2c27c"/><rect x="13" y="10" width="2" height="5.7" rx="0.8" fill="#e2c27c"/><rect x="3.5" y="11.8" width="9.5" height="0.9" fill="#e4dccb"/></svg></div>
  <div class="cl" style="left:283px;top:297px;width:65px;height:52px"><span class="nw">HCDD1125D</span></div>
  <div class="cl" style="left:357px;top:297px;width:80px;height:52px">Nábytok</div>
  <div class="cl" style="left:446px;top:297px;width:133px;height:52px">stôl kovové nohy,<br>pracovná doska<br>&nbsp;</div>
  <div class="cl" style="left:581px;top:297px;width:45px;height:52px;justify-content:flex-end;text-align:right">1</div>
  <div class="cl" style="left:642px;top:297px;width:85px;height:52px">Chemické<br>laboratórium</div>
  <div class="cl" style="left:729px;top:297px;width:45px;height:52px;justify-content:flex-end;text-align:right">2025</div>
  <div class="cl" style="left:790px;top:297px;width:115px;height:52px">Učiteľ 05</div>
  <div class="cl" style="left:1141px;top:297px;width:129px;height:52px">kúpa</div>
  <div class="a" style="left:253px;top:368px"><svg width="16" height="16" viewBox="0 0 16 16"><rect x="3.5" y="0.5" width="9" height="6.5" fill="#c2e2f6" stroke="#8da3be" stroke-width="1"/><rect x="6" y="7" width="4" height="1" fill="#8da3be"/><rect x="0" y="8" width="16" height="2.2" rx="1" fill="#deba70"/><rect x="1.5" y="10" width="2" height="5.7" rx="0.8" fill="#e2c27c"/><rect x="13" y="10" width="2" height="5.7" rx="0.8" fill="#e2c27c"/><rect x="3.5" y="11.8" width="9.5" height="0.9" fill="#e4dccb"/></svg></div>
  <div class="cl" style="left:283px;top:350px;width:65px;height:52px"><span class="nw">HCDD1125D</span></div>
  <div class="cl" style="left:357px;top:350px;width:80px;height:52px">Nábytok</div>
  <div class="cl" style="left:1141px;top:350px;width:129px;height:52px">kúpa</div>
  <div class="a" style="left:253px;top:421px"><svg width="16" height="16" viewBox="0 0 16 16"><rect x="3.5" y="0.5" width="9" height="6.5" fill="#c2e2f6" stroke="#8da3be" stroke-width="1"/><rect x="6" y="7" width="4" height="1" fill="#8da3be"/><rect x="0" y="8" width="16" height="2.2" rx="1" fill="#deba70"/><rect x="1.5" y="10" width="2" height="5.7" rx="0.8" fill="#e2c27c"/><rect x="13" y="10" width="2" height="5.7" rx="0.8" fill="#e2c27c"/><rect x="3.5" y="11.8" width="9.5" height="0.9" fill="#e4dccb"/></svg></div>
  <div class="cl" style="left:283px;top:403px;width:65px;height:52px"><span class="nw">HCDD1125D</span></div>
  <div class="cl" style="left:357px;top:403px;width:80px;height:52px">Nábytok</div>
  <div class="cl" style="left:1141px;top:403px;width:129px;height:52px">kúpa</div>
  <div class="a" style="left:253px;top:467px"><svg width="16" height="16" viewBox="0 0 16 16"><rect x="3.5" y="0.5" width="9" height="6.5" fill="#c2e2f6" stroke="#8da3be" stroke-width="1"/><rect x="6" y="7" width="4" height="1" fill="#8da3be"/><rect x="0" y="8" width="16" height="2.2" rx="1" fill="#deba70"/><rect x="1.5" y="10" width="2" height="5.7" rx="0.8" fill="#e2c27c"/><rect x="13" y="10" width="2" height="5.7" rx="0.8" fill="#e2c27c"/><rect x="3.5" y="11.8" width="9.5" height="0.9" fill="#e4dccb"/></svg></div>
  <div class="cl" style="left:283px;top:456px;width:65px;height:38px"><span class="nw">I-001B01</span></div>
  <div class="cl" style="left:357px;top:456px;width:80px;height:38px">-</div>
  <div class="a" style="left:253px;top:504px"><svg width="16" height="16" viewBox="0 0 16 16"><rect x="3.5" y="0.5" width="9" height="6.5" fill="#c2e2f6" stroke="#8da3be" stroke-width="1"/><rect x="6" y="7" width="4" height="1" fill="#8da3be"/><rect x="0" y="8" width="16" height="2.2" rx="1" fill="#deba70"/><rect x="1.5" y="10" width="2" height="5.7" rx="0.8" fill="#e2c27c"/><rect x="13" y="10" width="2" height="5.7" rx="0.8" fill="#e2c27c"/><rect x="3.5" y="11.8" width="9.5" height="0.9" fill="#e4dccb"/></svg></div>
  <div class="cl" style="left:283px;top:495px;width:65px;height:33px"><span class="nw">I-001B02</span></div>
  <div class="cl" style="left:357px;top:495px;width:80px;height:33px">-</div>
  <div class="a" style="left:253px;top:538px"><svg width="16" height="16" viewBox="0 0 16 16"><rect x="3.5" y="0.5" width="9" height="6.5" fill="#c2e2f6" stroke="#8da3be" stroke-width="1"/><rect x="6" y="7" width="4" height="1" fill="#8da3be"/><rect x="0" y="8" width="16" height="2.2" rx="1" fill="#deba70"/><rect x="1.5" y="10" width="2" height="5.7" rx="0.8" fill="#e2c27c"/><rect x="13" y="10" width="2" height="5.7" rx="0.8" fill="#e2c27c"/><rect x="3.5" y="11.8" width="9.5" height="0.9" fill="#e4dccb"/></svg></div>
  <div class="cl" style="left:283px;top:529px;width:65px;height:33px"><span class="nw">I-001B03</span></div>
  <div class="cl" style="left:357px;top:529px;width:80px;height:33px">-</div>
  <div class="a" style="left:253px;top:581px"><svg width="16" height="16" viewBox="0 0 16 16"><rect x="3.5" y="0.5" width="9" height="6.5" fill="#c2e2f6" stroke="#8da3be" stroke-width="1"/><rect x="6" y="7" width="4" height="1" fill="#8da3be"/><rect x="0" y="8" width="16" height="2.2" rx="1" fill="#deba70"/><rect x="1.5" y="10" width="2" height="5.7" rx="0.8" fill="#e2c27c"/><rect x="13" y="10" width="2" height="5.7" rx="0.8" fill="#e2c27c"/><rect x="3.5" y="11.8" width="9.5" height="0.9" fill="#e4dccb"/></svg></div>
  <div class="cl" style="left:283px;top:563px;width:65px;height:52px"><span class="nw">I-001B04</span></div>
  <div class="cl" style="left:357px;top:563px;width:80px;height:52px">-</div>
  <div class="a" style="left:253px;top:625px"><svg width="16" height="16" viewBox="0 0 16 16"><rect x="3.5" y="0.5" width="9" height="6.5" fill="#c2e2f6" stroke="#8da3be" stroke-width="1"/><rect x="6" y="7" width="4" height="1" fill="#8da3be"/><rect x="0" y="8" width="16" height="2.2" rx="1" fill="#deba70"/><rect x="1.5" y="10" width="2" height="5.7" rx="0.8" fill="#e2c27c"/><rect x="13" y="10" width="2" height="5.7" rx="0.8" fill="#e2c27c"/><rect x="3.5" y="11.8" width="9.5" height="0.9" fill="#e4dccb"/></svg></div>
  <div class="cl" style="left:283px;top:616px;width:65px;height:33px"><span class="nw">I-001B05</span></div>
  <div class="cl" style="left:357px;top:616px;width:80px;height:33px">-</div>
  <div class="a" style="left:253px;top:659px"><svg width="16" height="16" viewBox="0 0 16 16"><rect x="3.5" y="0.5" width="9" height="6.5" fill="#c2e2f6" stroke="#8da3be" stroke-width="1"/><rect x="6" y="7" width="4" height="1" fill="#8da3be"/><rect x="0" y="8" width="16" height="2.2" rx="1" fill="#deba70"/><rect x="1.5" y="10" width="2" height="5.7" rx="0.8" fill="#e2c27c"/><rect x="13" y="10" width="2" height="5.7" rx="0.8" fill="#e2c27c"/><rect x="3.5" y="11.8" width="9.5" height="0.9" fill="#e4dccb"/></svg></div>
  <div class="cl" style="left:283px;top:650px;width:65px;height:33px"><span class="nw">I-001B06</span></div>
  <div class="cl" style="left:357px;top:650px;width:80px;height:33px">-</div>
  <div class="a" style="left:253px;top:693px"><svg width="16" height="16" viewBox="0 0 16 16"><rect x="3.5" y="0.5" width="9" height="6.5" fill="#c2e2f6" stroke="#8da3be" stroke-width="1"/><rect x="6" y="7" width="4" height="1" fill="#8da3be"/><rect x="0" y="8" width="16" height="2.2" rx="1" fill="#deba70"/><rect x="1.5" y="10" width="2" height="5.7" rx="0.8" fill="#e2c27c"/><rect x="13" y="10" width="2" height="5.7" rx="0.8" fill="#e2c27c"/><rect x="3.5" y="11.8" width="9.5" height="0.9" fill="#e4dccb"/></svg></div>
  <div class="cl" style="left:283px;top:684px;width:65px;height:33px"><span class="nw">I-001B07</span></div>
  <div class="cl" style="left:357px;top:684px;width:80px;height:33px">-</div>
  <div class="a" style="left:253px;top:729px"><svg width="16" height="16" viewBox="0 0 16 16"><rect x="3.5" y="0.5" width="9" height="6.5" fill="#c2e2f6" stroke="#8da3be" stroke-width="1"/><rect x="6" y="7" width="4" height="1" fill="#8da3be"/><rect x="0" y="8" width="16" height="2.2" rx="1" fill="#deba70"/><rect x="1.5" y="10" width="2" height="5.7" rx="0.8" fill="#e2c27c"/><rect x="13" y="10" width="2" height="5.7" rx="0.8" fill="#e2c27c"/><rect x="3.5" y="11.8" width="9.5" height="0.9" fill="#e4dccb"/></svg></div>
  <div class="cl" style="left:283px;top:718px;width:65px;height:38px"><span class="nw">I-001B08</span></div>
  <div class="cl" style="left:357px;top:718px;width:80px;height:38px">-</div>
  <div class="a" style="left:253px;top:768px"><svg width="16" height="16" viewBox="0 0 16 16"><rect x="3.5" y="0.5" width="9" height="6.5" fill="#c2e2f6" stroke="#8da3be" stroke-width="1"/><rect x="6" y="7" width="4" height="1" fill="#8da3be"/><rect x="0" y="8" width="16" height="2.2" rx="1" fill="#deba70"/><rect x="1.5" y="10" width="2" height="5.7" rx="0.8" fill="#e2c27c"/><rect x="13" y="10" width="2" height="5.7" rx="0.8" fill="#e2c27c"/><rect x="3.5" y="11.8" width="9.5" height="0.9" fill="#e4dccb"/></svg></div>
  <div class="cl" style="left:283px;top:757px;width:65px;height:38px"><span class="nw">I-001B09</span></div>
  <div class="cl" style="left:357px;top:757px;width:80px;height:38px">-</div>
  <div class="a" style="left:253px;top:805px"><svg width="16" height="16" viewBox="0 0 16 16"><rect x="3.5" y="0.5" width="9" height="6.5" fill="#c2e2f6" stroke="#8da3be" stroke-width="1"/><rect x="6" y="7" width="4" height="1" fill="#8da3be"/><rect x="0" y="8" width="16" height="2.2" rx="1" fill="#deba70"/><rect x="1.5" y="10" width="2" height="5.7" rx="0.8" fill="#e2c27c"/><rect x="13" y="10" width="2" height="5.7" rx="0.8" fill="#e2c27c"/><rect x="3.5" y="11.8" width="9.5" height="0.9" fill="#e4dccb"/></svg></div>
  <div class="cl" style="left:283px;top:796px;width:65px;height:33px"><span class="nw">I-001B10</span></div>
  <div class="cl" style="left:357px;top:796px;width:80px;height:33px">-</div>
  <div class="a" style="left:253px;top:841px"><svg width="16" height="16" viewBox="0 0 16 16"><rect x="3.5" y="0.5" width="9" height="6.5" fill="#c2e2f6" stroke="#8da3be" stroke-width="1"/><rect x="6" y="7" width="4" height="1" fill="#8da3be"/><rect x="0" y="8" width="16" height="2.2" rx="1" fill="#deba70"/><rect x="1.5" y="10" width="2" height="5.7" rx="0.8" fill="#e2c27c"/><rect x="13" y="10" width="2" height="5.7" rx="0.8" fill="#e2c27c"/><rect x="3.5" y="11.8" width="9.5" height="0.9" fill="#e4dccb"/></svg></div>
  <div class="cl" style="left:283px;top:830px;width:65px;height:38px"><span class="nw">I-001B11</span></div>
  <div class="cl" style="left:357px;top:830px;width:80px;height:38px">-</div>
  <div class="a" style="left:253px;top:878px"><svg width="16" height="16" viewBox="0 0 16 16"><rect x="3.5" y="0.5" width="9" height="6.5" fill="#c2e2f6" stroke="#8da3be" stroke-width="1"/><rect x="6" y="7" width="4" height="1" fill="#8da3be"/><rect x="0" y="8" width="16" height="2.2" rx="1" fill="#deba70"/><rect x="1.5" y="10" width="2" height="5.7" rx="0.8" fill="#e2c27c"/><rect x="13" y="10" width="2" height="5.7" rx="0.8" fill="#e2c27c"/><rect x="3.5" y="11.8" width="9.5" height="0.9" fill="#e4dccb"/></svg></div>
  <div class="cl" style="left:283px;top:869px;width:65px;height:33px"><span class="nw">I-001B12</span></div>
  <div class="cl" style="left:357px;top:869px;width:80px;height:33px">-</div>
  <div class="cl" style="left:446px;top:869px;width:133px;height:33px">skrinka dverová vysoká</div>
  <div class="cl" style="left:581px;top:869px;width:45px;height:33px;justify-content:flex-end;text-align:right">1</div>
  <div class="cl" style="left:642px;top:869px;width:85px;height:33px">-</div>
  <div class="cl" style="left:790px;top:869px;width:115px;height:33px">Učiteľ 08</div>
  <div class="a" style="left:253px;top:914px"><svg width="16" height="16" viewBox="0 0 16 16"><rect x="3.5" y="0.5" width="9" height="6.5" fill="#c2e2f6" stroke="#8da3be" stroke-width="1"/><rect x="6" y="7" width="4" height="1" fill="#8da3be"/><rect x="0" y="8" width="16" height="2.2" rx="1" fill="#deba70"/><rect x="1.5" y="10" width="2" height="5.7" rx="0.8" fill="#e2c27c"/><rect x="13" y="10" width="2" height="5.7" rx="0.8" fill="#e2c27c"/><rect x="3.5" y="11.8" width="9.5" height="0.9" fill="#e4dccb"/></svg></div>
  <div class="cl" style="left:283px;top:903px;width:65px;height:38px"><span class="nw">I-001B13</span></div>
  <div class="cl" style="left:357px;top:903px;width:80px;height:38px">-</div>
  <div class="cl" style="left:446px;top:903px;width:133px;height:38px">skrinka dverová, 1<br>polica</div>
  <div class="cl" style="left:581px;top:903px;width:45px;height:38px;justify-content:flex-end;text-align:right">1</div>
  <div class="cl" style="left:642px;top:903px;width:85px;height:38px">-</div>
  <div class="cl" style="left:790px;top:903px;width:115px;height:38px">Učiteľ 08</div>
  <div class="a" style="left:1290px;top:219px;width:14px;height:715px;background:#efefef"></div>
  <svg class="a" style="left:1293px;top:224px" width="9" height="7" viewBox="0 0 9 7"><path d="M4.5 0.5L9 7H0Z" fill="#9a9a9a"/></svg>
  <div class="a" style="left:1293px;top:323px;width:9px;height:17px;border-radius:4px;background:#9e9e9e"></div>
  <svg class="a" style="left:1293px;top:923px" width="9" height="7" viewBox="0 0 9 7"><path d="M0 0H9L4.5 6.5Z" fill="#9a9a9a"/></svg>
  <div class="a rb" style="left:240px;top:153px;width:1037px;height:71px"></div>
  <div class="a rb" style="left:437px;top:41px;width:69px;height:35px"></div>
  <div class="a rb" style="left:685px;top:72px;width:71px;height:32px"></div>
  <div class="a" style="left:421px;top:325px;width:602px;height:541px;background:#fff;border-radius:3px 3px 3px 3px;box-shadow:3px 5px 9px rgba(0,0,0,0.42), 0 0 0 1px rgba(0,0,0,0.06);z-index:60"></div>
  <div class="a" style="z-index:61;left:421px;top:325px;width:602px;height:25px;background:#475a67;border-radius:3px 3px 0 0"></div>
  <div class="a" style="z-index:61;left:437px;top:331px;color:#fff;font-weight:bold;font-size:12px;line-height:14px">Pohľad - Stĺpce</div>
  <svg class="a" style="z-index:61;left:984px;top:333px" width="10" height="10" viewBox="0 0 10 10"><path d="M1 9L9 1M5 1H9V5M1 5V9H5" stroke="#fff" stroke-width="1.6" fill="none"/></svg>
  <svg class="a" style="z-index:61;left:1005px;top:333px" width="10" height="10" viewBox="0 0 10 10"><path d="M1.2 1.2L8.8 8.8M8.8 1.2L1.2 8.8" stroke="#fff" stroke-width="2.4"/></svg>
  <div class="a" style="z-index:61;left:435px;top:356px;color:#444;font-size:12px;line-height:14px">Tabuľka: Inventár</div>
  <div class="a" style="z-index:61;left:436px;top:380px;width:66px;height:25px;background:#4287c4;border:1px solid #d8cfc8;border-bottom:0;color:#fff;font-weight:bold;font-size:12px;letter-spacing:-0.5px;line-height:22px;padding-left:11px">Vybrané</div>
  <div class="a" style="z-index:61;left:504px;top:380px;width:90px;height:24px;background:#fff;border:1px solid #c4c4c4;border-bottom:0;color:#222;font-size:12px;line-height:22px;padding-left:11px">Základné (3)</div>
  <div class="a" style="z-index:61;left:596px;top:380px;width:82px;height:24px;background:#fff;border:1px solid #c4c4c4;border-bottom:0;color:#222;font-size:12px;line-height:22px;padding-left:11px">Ostatné (9)</div>
  <div class="a" style="z-index:61;left:434px;top:404px;width:576px;height:3px;background:#4287c4"></div>
  <div class="a" style="z-index:61;left:434px;top:404px;width:576px;height:399px;border:1px solid #7a7a7a;border-top:0"></div>
  <div class="a" style="z-index:61;left:702px;top:414px;width:0;height:380px;border-left:1px dashed #d4d4d4"></div>
  <div class="it" style="top:419px"><svg class="hn" width="11" height="9" viewBox="0 0 11 9"><path d="M0 1H11M0 4.5H11M0 8H11" stroke="#c8c8c8" stroke-width="1.7"/></svg>Ikona<svg class="xx" width="9" height="9" viewBox="0 0 9 9"><path d="M1.5 1.5L7.5 7.5M7.5 1.5L1.5 7.5" stroke="#c8c8c8" stroke-width="3" stroke-linecap="round"/></svg></div>
  <div class="it" style="top:447px"><svg class="hn" width="11" height="9" viewBox="0 0 11 9"><path d="M0 1H11M0 4.5H11M0 8H11" stroke="#c8c8c8" stroke-width="1.7"/></svg>Číslo<svg class="fo" width="12" height="11" viewBox="0 0 12 11"><path d="M0.8 2 Q0.8 0.8 2 0.8 H4.5 L6 2.3 H10.2 Q11.2 2.3 11.2 3.3 V8.8 Q11.2 9.8 10.2 9.8 H1.8 Q0.8 9.8 0.8 8.8 Z" fill="none" stroke="#cdcdcd" stroke-width="1.1"/></svg><svg class="xx" width="9" height="9" viewBox="0 0 9 9"><path d="M1.5 1.5L7.5 7.5M7.5 1.5L1.5 7.5" stroke="#c8c8c8" stroke-width="3" stroke-linecap="round"/></svg></div>
  <div class="it" style="top:475px"><svg class="hn" width="11" height="9" viewBox="0 0 11 9"><path d="M0 1H11M0 4.5H11M0 8H11" stroke="#c8c8c8" stroke-width="1.7"/></svg>Inventár<svg class="fo" width="12" height="11" viewBox="0 0 12 11"><path d="M0.8 2 Q0.8 0.8 2 0.8 H4.5 L6 2.3 H10.2 Q11.2 2.3 11.2 3.3 V8.8 Q11.2 9.8 10.2 9.8 H1.8 Q0.8 9.8 0.8 8.8 Z" fill="none" stroke="#cdcdcd" stroke-width="1.1"/></svg><svg class="xx" width="9" height="9" viewBox="0 0 9 9"><path d="M1.5 1.5L7.5 7.5M7.5 1.5L1.5 7.5" stroke="#c8c8c8" stroke-width="3" stroke-linecap="round"/></svg></div>
  <div class="it" style="top:503px"><svg class="hn" width="11" height="9" viewBox="0 0 11 9"><path d="M0 1H11M0 4.5H11M0 8H11" stroke="#c8c8c8" stroke-width="1.7"/></svg>Názov<svg class="fo" width="12" height="11" viewBox="0 0 12 11"><path d="M0.8 2 Q0.8 0.8 2 0.8 H4.5 L6 2.3 H10.2 Q11.2 2.3 11.2 3.3 V8.8 Q11.2 9.8 10.2 9.8 H1.8 Q0.8 9.8 0.8 8.8 Z" fill="none" stroke="#cdcdcd" stroke-width="1.1"/></svg><svg class="xx" width="9" height="9" viewBox="0 0 9 9"><path d="M1.5 1.5L7.5 7.5M7.5 1.5L1.5 7.5" stroke="#c8c8c8" stroke-width="3" stroke-linecap="round"/></svg></div>
  <div class="it" style="top:531px"><svg class="hn" width="11" height="9" viewBox="0 0 11 9"><path d="M0 1H11M0 4.5H11M0 8H11" stroke="#c8c8c8" stroke-width="1.7"/></svg>Počet<svg class="fo" width="12" height="11" viewBox="0 0 12 11"><path d="M0.8 2 Q0.8 0.8 2 0.8 H4.5 L6 2.3 H10.2 Q11.2 2.3 11.2 3.3 V8.8 Q11.2 9.8 10.2 9.8 H1.8 Q0.8 9.8 0.8 8.8 Z" fill="none" stroke="#cdcdcd" stroke-width="1.1"/></svg><svg class="xx" width="9" height="9" viewBox="0 0 9 9"><path d="M1.5 1.5L7.5 7.5M7.5 1.5L1.5 7.5" stroke="#c8c8c8" stroke-width="3" stroke-linecap="round"/></svg></div>
  <div class="it" style="top:559px"><svg class="hn" width="11" height="9" viewBox="0 0 11 9"><path d="M0 1H11M0 4.5H11M0 8H11" stroke="#c8c8c8" stroke-width="1.7"/></svg>Učebňa<svg class="fo" width="12" height="11" viewBox="0 0 12 11"><path d="M0.8 2 Q0.8 0.8 2 0.8 H4.5 L6 2.3 H10.2 Q11.2 2.3 11.2 3.3 V8.8 Q11.2 9.8 10.2 9.8 H1.8 Q0.8 9.8 0.8 8.8 Z" fill="none" stroke="#cdcdcd" stroke-width="1.1"/></svg><svg class="xx" width="9" height="9" viewBox="0 0 9 9"><path d="M1.5 1.5L7.5 7.5M7.5 1.5L1.5 7.5" stroke="#c8c8c8" stroke-width="3" stroke-linecap="round"/></svg></div>
  <div class="it" style="top:587px"><svg class="hn" width="11" height="9" viewBox="0 0 11 9"><path d="M0 1H11M0 4.5H11M0 8H11" stroke="#c8c8c8" stroke-width="1.7"/></svg>Rok<svg class="fo" width="12" height="11" viewBox="0 0 12 11"><path d="M0.8 2 Q0.8 0.8 2 0.8 H4.5 L6 2.3 H10.2 Q11.2 2.3 11.2 3.3 V8.8 Q11.2 9.8 10.2 9.8 H1.8 Q0.8 9.8 0.8 8.8 Z" fill="none" stroke="#cdcdcd" stroke-width="1.1"/></svg><svg class="xx" width="9" height="9" viewBox="0 0 9 9"><path d="M1.5 1.5L7.5 7.5M7.5 1.5L1.5 7.5" stroke="#c8c8c8" stroke-width="3" stroke-linecap="round"/></svg></div>
  <div class="it" style="top:615px"><svg class="hn" width="11" height="9" viewBox="0 0 11 9"><path d="M0 1H11M0 4.5H11M0 8H11" stroke="#c8c8c8" stroke-width="1.7"/></svg>Zodpovedná osoba<svg class="fo" width="12" height="11" viewBox="0 0 12 11"><path d="M0.8 2 Q0.8 0.8 2 0.8 H4.5 L6 2.3 H10.2 Q11.2 2.3 11.2 3.3 V8.8 Q11.2 9.8 10.2 9.8 H1.8 Q0.8 9.8 0.8 8.8 Z" fill="none" stroke="#cdcdcd" stroke-width="1.1"/></svg><svg class="xx" width="9" height="9" viewBox="0 0 9 9"><path d="M1.5 1.5L7.5 7.5M7.5 1.5L1.5 7.5" stroke="#c8c8c8" stroke-width="3" stroke-linecap="round"/></svg></div>
  <div class="it" style="top:643px"><svg class="hn" width="11" height="9" viewBox="0 0 11 9"><path d="M0 1H11M0 4.5H11M0 8H11" stroke="#c8c8c8" stroke-width="1.7"/></svg>Cena<svg class="xx" width="9" height="9" viewBox="0 0 9 9"><path d="M1.5 1.5L7.5 7.5M7.5 1.5L1.5 7.5" stroke="#c8c8c8" stroke-width="3" stroke-linecap="round"/></svg></div>
  <div class="it" style="top:671px"><svg class="hn" width="11" height="9" viewBox="0 0 11 9"><path d="M0 1H11M0 4.5H11M0 8H11" stroke="#c8c8c8" stroke-width="1.7"/></svg>Cena spolu<svg class="xx" width="9" height="9" viewBox="0 0 9 9"><path d="M1.5 1.5L7.5 7.5M7.5 1.5L1.5 7.5" stroke="#c8c8c8" stroke-width="3" stroke-linecap="round"/></svg></div>
  <div class="it" style="top:699px"><svg class="hn" width="11" height="9" viewBox="0 0 11 9"><path d="M0 1H11M0 4.5H11M0 8H11" stroke="#c8c8c8" stroke-width="1.7"/></svg>Výrobné číslo<svg class="xx" width="9" height="9" viewBox="0 0 9 9"><path d="M1.5 1.5L7.5 7.5M7.5 1.5L1.5 7.5" stroke="#c8c8c8" stroke-width="3" stroke-linecap="round"/></svg></div>
  <div class="it" style="top:727px"><svg class="hn" width="11" height="9" viewBox="0 0 11 9"><path d="M0 1H11M0 4.5H11M0 8H11" stroke="#c8c8c8" stroke-width="1.7"/></svg>Spôsob nadobudnutia<svg class="fo" width="12" height="11" viewBox="0 0 12 11"><path d="M0.8 2 Q0.8 0.8 2 0.8 H4.5 L6 2.3 H10.2 Q11.2 2.3 11.2 3.3 V8.8 Q11.2 9.8 10.2 9.8 H1.8 Q0.8 9.8 0.8 8.8 Z" fill="none" stroke="#cdcdcd" stroke-width="1.1"/></svg><svg class="xx" width="9" height="9" viewBox="0 0 9 9"><path d="M1.5 1.5L7.5 7.5M7.5 1.5L1.5 7.5" stroke="#c8c8c8" stroke-width="3" stroke-linecap="round"/></svg></div>
  <div class="a" style="z-index:61;left:713px;top:417px;color:#444;font-size:12px;line-height:14px">Pridať:</div>
  <div class="a" style="z-index:61;left:754px;top:414px;width:245px;height:20px;border:1px solid #c6c6c6;color:#999;font-size:12px;line-height:18px;padding-left:3px">Hľadať</div>
  <div class="a" style="z-index:61;left:713px;top:464px;width:290px;color:#444;font-size:12px;line-height:14px">Stĺpce môžete zoradiť potiahnutím <svg width="11" height="9" viewBox="0 0 11 9" style="vertical-align:-1px"><path d="M0 1H11M0 4.5H11M0 8H11" stroke="#c8c8c8" stroke-width="1.5"/></svg> hore/dole a<br>zoskupiť kliknutím na ikonu <svg width="12" height="10" viewBox="0 0 12 10" style="vertical-align:-1px"><path d="M0.5 1.5H4.5L5.5 3H11.5V9.5H0.5Z" fill="none" stroke="#c8c8c8" stroke-width="1"/></svg>.</div>
  <div class="a" style="z-index:61;left:717px;top:535px;width:13px;height:13px;border:1px solid #555;border-radius:2px;background:#fff"></div>
  <div class="a" style="z-index:61;left:733px;top:534px;color:#444;font-size:12px;line-height:14px">Zobraziť: Celkom</div>
  <div class="a" style="z-index:61;left:421px;top:815px;width:602px;height:1px;background:#dcdcdc"></div>
  <div class="a" style="z-index:61;left:912px;top:826px;width:38px;height:30px;background:#52a852;border-radius:3px;color:#fff;font-size:12px;line-height:30px;text-align:center">Ok</div>
  <div class="a" style="z-index:61;left:956px;top:826px;width:53px;height:30px;background:#f3f4f8;border:1px solid #dadce2;border-radius:3px;color:#222;font-size:12px;line-height:28px;text-align:center">Zrušiť</div>
  <div class="a rb" style="left:440px;top:415px;width:147px;height:348px;z-index:70"></div>
</div>
<div id="frame" class="a"></div>
</body></html>
